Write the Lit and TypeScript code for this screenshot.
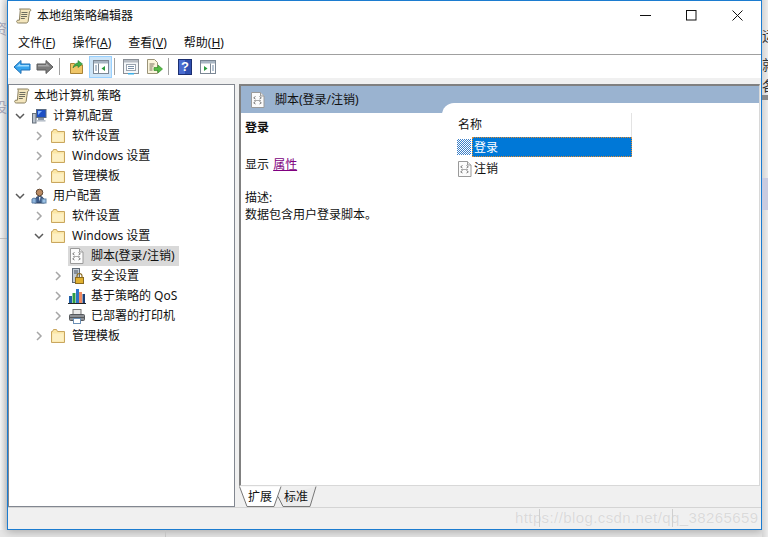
import { LitElement, html, css, svg } from "lit";
import { customElement } from "lit/decorators.js";

const scroll = svg`<svg class="ic" width="16" height="16" viewBox="0 0 16 16"><path d="M3.500 1h10c1 0 1.500 .8 1.300 1.600L13.500 3.500l-1.300 9.700c-.1 1-1 1.800-2 1.800H2.300c-1 0-1.800-.8-1.600-1.800.1-.6.500-1 1.200-1H3.400L4.200 3C4.300 2 4 1 3.500 1z" fill="#f4e6bd" stroke="#8a8060"/><path d="M5.500 4.500h6M5.300 6.500h6M5 8.500h6M4.800 10.500h4" stroke="#6e6e60" fill="none"/></svg>`;
const folder = svg`<svg class="ic" width="16" height="16" viewBox="0 0 16 16"><path d="M1.500 14.500V3.500h1l1-2h3l1 2h7v11z" fill="#fbe6a4" stroke="#c9a65e"/><path d="M2.500 13.500V5.500h11v8z" fill="#fdf0c4"/></svg>`;
const computer = svg`<svg class="ic" width="16" height="16" viewBox="0 0 16 16"><rect x="1.500" y="5.500" width="3.500" height="9.500" fill="#b9c2cc" stroke="#66707c"/><rect x="5.500" y="1.500" width="9.500" height="8" fill="#1d4fc4" stroke="#5b6b80"/><path d="M7 3h4l-4 4z" fill="#7fb4ff"/><rect x="7" y="10" width="6" height="2" fill="#8a96a6"/><rect x="5.500" y="12" width="9" height="1.600" fill="#b8c0ca"/></svg>`;
const user = svg`<svg class="ic" width="16" height="16" viewBox="0 0 16 16"><circle cx="8.500" cy="4.500" r="3.300" fill="#b98a62" stroke="#5e4632"/><path d="M3.500 15c0-5 2-6.500 5-6.500s5 1.500 5 6.500z" fill="#3d5c8a" stroke="#2f3f5a"/><path d="M1 15v-4l2-1 2 1v4z" fill="#8db4dc" stroke="#5c7fa6"/><path d="M8 9l.7 4.500L9.500 9z" fill="#fff"/><rect x="11" y="11" width="4" height="4" fill="#9cc2e6" stroke="#6285a8"/></svg>`;
const script = svg`<svg class="ic" width="16" height="16" viewBox="0 0 16 16"><path d="M1.500 .5h9l3.500 3.500v11.500H1.500z" fill="#fbfbfb" stroke="#9a9a9a"/><path d="M10.500 .5v3.500h3.500" fill="#e6e6e6" stroke="#9a9a9a"/><path d="M5.500 4.500L3.700 5.800l1.800 1.200M9.500 4.500l1.800 1.300L9.500 7M5.500 9.500L3.700 10.800l1.800 1.200M9.500 9.500l1.800 1.300L9.500 12" fill="none" stroke="#777"/><path d="M4 8.500h7" stroke="#aaa"/></svg>`;
const security = svg`<svg class="ic" width="16" height="16" viewBox="0 0 16 16"><rect x="3.500" y="0.500" width="7" height="14" fill="#c3ccd6" stroke="#5f6a76"/><path d="M5 3h4M5 5h4" stroke="#45505c"/><path d="M8 9.500V8a2.500 2.500 0 015 0v1.500" fill="none" stroke="#8a6a20" stroke-width="1.200"/><rect x="6.500" y="9.500" width="8" height="6" fill="#e0b030" stroke="#8a6a20"/></svg>`;
const chart = svg`<svg class="ic" width="18" height="16" viewBox="0 0 18 16"><rect x="1" y="8" width="3" height="7" fill="#1f5fa8"/><rect x="4.500" y="5" width="3" height="10" fill="#2f9e44"/><rect x="8" y="1" width="3" height="14" fill="#2f74c8"/><rect x="11" y="4" width="3" height="11" fill="#f08a60"/><rect x="14.500" y="6" width="2.500" height="9" fill="#1c3f78"/><path d="M0 15.500h18" stroke="#222"/></svg>`;
const printer = svg`<svg class="ic" width="18" height="16" viewBox="0 0 18 16"><rect x="5" y="1.500" width="8" height="5" fill="#e9e9e9" stroke="#777"/><rect x="1.500" y="6.500" width="15" height="6" rx="1" fill="#8c8f94" stroke="#55585c"/><path d="M2 9.500h14" stroke="#55585c"/><rect x="5.500" y="10.500" width="7" height="5" fill="#fff" stroke="#6b8fb5"/></svg>`;
const chevD = svg`<svg width="12" height="12" viewBox="0 0 12 12"><path d="M2 4l4 4 4-4" fill="none" stroke="#595959" stroke-width="1.500"/></svg>`;
const chevR = svg`<svg width="12" height="12" viewBox="0 0 12 12"><path d="M4 2l4 4-4 4" fill="none" stroke="#a6a6a6" stroke-width="1.500"/></svg>`;

const back = svg`<svg width="18" height="16" viewBox="0 0 18 16"><path d="M1 8l7-6.500V5h9v6H8v3.500z" fill="#36a4ee" stroke="#1f6fb5"/><path d="M3 8l4-3.500V6h9v1.500H4z" fill="#9fdcff"/></svg>`;
const fwd = svg`<svg width="18" height="16" viewBox="0 0 18 16"><path d="M17 8l-7-6.500V5H1v6h9v3.500z" fill="#7c7c7c" stroke="#5a5a5a"/><path d="M2 6h8V4l4 3.500H2z" fill="#a8a8a8"/></svg>`;
const up = svg`<svg width="16" height="16" viewBox="0 0 16 16"><path d="M1.500 14.500V4.500h4l1 1.500h7v8.500z" fill="#efc567" stroke="#a98335"/><path d="M4 9c.5-3 2.500-5 5-5V1.500L13.500 5 9 8.500V6.500c-2 0-4 1-5 2.500z" fill="#3fae4a" stroke="#2a7a32" stroke-width=".6"/></svg>`;
const paneHide = svg`<svg width="16" height="14" viewBox="0 0 16 14"><rect x=".5" y=".5" width="15" height="13" fill="#fff" stroke="#7b8794"/><rect x="1" y="1" width="14" height="2.500" fill="#a9b6c3"/><path d="M5.500 3.500v10" stroke="#7b8794"/><path d="M2 6h2M2 8h2M2 10h2" stroke="#6f8aa8"/><path d="M12 6v5L8.500 8.500z" fill="#2a9a3c"/></svg>`;
const props = svg`<svg width="16" height="16" viewBox="0 0 16 16"><rect x=".5" y=".5" width="15" height="14" fill="#f4f6f8" stroke="#8a8f96"/><rect x="1" y="1" width="14" height="2.500" fill="#b6bcc4"/><rect x="3.500" y="5.500" width="9" height="6" fill="#fff" stroke="#9aa4b0"/><path d="M5 7.500h6M5 9.500h6" stroke="#7a90a8"/><rect x="5" y="14" width="6" height="1.500" fill="#3db0e8"/></svg>`;
const exportIc = svg`<svg width="17" height="16" viewBox="0 0 17 16"><path d="M1.500 .5h7l3 3v11h-10z" fill="#fbf5dc" stroke="#9a9378"/><path d="M3.500 5h5M3.500 7h4M3.500 9h3M3.500 11h3" stroke="#77705a"/><path d="M8 8.500h4V6l4.500 4-4.500 4v-2.500H8z" fill="#55bb44" stroke="#3a8f2e" stroke-width=".7"/></svg>`;
const help = svg`<svg width="14" height="16" viewBox="0 0 14 16"><rect x=".5" y=".5" width="13" height="15" fill="#2f4fb0" stroke="#1b2e70"/><rect x="1" y="1" width="6" height="14" fill="#4a6cd0"/></svg>`;
const paneShow = svg`<svg width="16" height="14" viewBox="0 0 16 14"><rect x=".5" y=".5" width="15" height="13" fill="#fff" stroke="#7b8794"/><rect x="1" y="1" width="14" height="2.500" fill="#a9b6c3"/><path d="M10.500 3.500v10" stroke="#7b8794"/><path d="M12 6h2M12 8h2M12 10h2" stroke="#6f8aa8"/><path d="M4 6v5l3.500-2.500z" fill="#2a9a3c"/></svg>`;

type Row = { level: number; chev?: "d" | "r"; icon: unknown; text: string; sel?: boolean };
const rows: Row[] = [
  { level: 0, icon: scroll, text: "本地计算机 策略" },
  { level: 1, chev: "d", icon: computer, text: "计算机配置" },
  { level: 2, chev: "r", icon: folder, text: "软件设置" },
  { level: 2, chev: "r", icon: folder, text: "Windows 设置" },
  { level: 2, chev: "r", icon: folder, text: "管理模板" },
  { level: 1, chev: "d", icon: user, text: "用户配置" },
  { level: 2, chev: "r", icon: folder, text: "软件设置" },
  { level: 2, chev: "d", icon: folder, text: "Windows 设置" },
  { level: 3, icon: script, text: "脚本(登录/注销)", sel: true },
  { level: 3, chev: "r", icon: security, text: "安全设置" },
  { level: 3, chev: "r", icon: chart, text: "基于策略的 QoS" },
  { level: 3, chev: "r", icon: printer, text: "已部署的打印机" },
  { level: 2, chev: "r", icon: folder, text: "管理模板" },
];

@customElement("app-root")
export class AppRoot extends LitElement {
  static styles = css`
    :host {
      display: flex;
      height: 537px;
      width: 768px;
      overflow: hidden;
      position: relative;
      background: #e6e6e6;
      font: 12px/16px "Noto Sans", "Noto Sans CJK SC", sans-serif;
      color: #111;
    }
    .strip { overflow: hidden; display: flex; flex-direction: column; flex: none; }
    .strip.l { width: 7px; background: linear-gradient(90deg, #f6f6f6, #dcdcdc); align-items: flex-end; padding-top: 22px; box-sizing: border-box; color: #aab; font-size: 14px; height: 530px; }
    .strip.l span { white-space: nowrap; width: 7px; overflow: hidden; height: 14px; line-height: 14px; flex: none; display: flex; justify-content: flex-end; }
    .strip.l .g { height: 64px; flex: none; }
    .strip.l .ln { height: 1px; width: 7px; background: #c4c4c4; margin-top: 124px; flex: none; }
    .strip.r { width: 6px; background: linear-gradient(90deg, #d4d4d4, #ececec); color: #333; padding-top: 28px; box-sizing: border-box; font-size: 14px; }
    .strip.r span { white-space: nowrap; flex: none; line-height: 15px; }
    .strip.r .s1 { height: 29px; }
    .strip.r .s2 { height: 21px; }
    .strip.r .s3 { height: 17px; }
    .strip.r .b { height: 5px; background: #8a8a8a; flex: none; }
    .strip.r .p { height: 32px; background: #c9cbe0; margin-top: 78px; flex: none; }
    .win {
      width: 755px;
      height: 530px;
      box-sizing: border-box;
      border: 1px solid #1c7cd0;
      background: #f0f0f0;
      box-shadow: 0 2px 8px rgba(0,0,0,.25);
      display: flex;
      flex-direction: column;
      flex: none;
    }
    .title { height: 32px; background: #fff; display: flex; align-items: center; padding-left: 8px; gap: 5px; flex: none; }
    .title .ic { margin-top: -2px; }
    .title .t { flex: 1; margin-top: -2px; }
    .wc { display: flex; align-items: center; margin-top: -3px; padding-right: 1px; }
    .wc span { width: 46px; display: flex; justify-content: center; }
    .menu { height: 22px; padding-bottom: 2px; box-sizing: border-box; background: #fff; display: flex; gap: 17px; padding-left: 10px; align-items: center; border-bottom: 1px solid #a0a0a0; flex: none; }
    .menu u { text-underline-offset: 1px; }
    .tools { height: 23px; background: #fff; display: flex; align-items: center; padding-left: 5px; flex: none; }
    .tools .b { display: flex; align-items: center; justify-content: center; flex: none; }
    .tools .s { width: 1px; height: 17px; background: #a0a0a0; flex: none; }
    .tools .on { width: 21px; height: 20px; background: #cce4f7; border: 1px solid #99d1ff; }
    .tools .help { position: relative; }
    .tools .q { position: absolute; inset: 0; display: flex; align-items: center; justify-content: center; color: #fff; font: 700 13px/16px "Liberation Sans", sans-serif; }
    .band { height: 6px; flex: none; }
    .panes { display: flex; flex: 1; min-height: 0; }
    .left { width: 227px; box-sizing: border-box; background: #fff; border: 1px solid #828790; padding-top: 1px; flex: none; }
    .row { height: 20px; display: flex; align-items: center; white-space: nowrap; }
    .chev { width: 12px; height: 12px; flex: none; display: flex; margin-right: 5px; }
    .item { display: flex; align-items: center; height: 20px; gap: 6px; }
    .item .ic { flex: none; }
    .item .txt { padding-right: 4px; }
    .item.sel { background: #d9d9d9; margin-left: -1px; padding-left: 1px; }
    .icw { width: 16px; display: flex; justify-content: center; flex: none; }
    .l0 { padding-left: 5px; }
    .l0 .item { gap: 4px; }
    .l1 { padding-left: 5px; }
    .l2 { padding-left: 24px; }
    .l3 { padding-left: 43px; }
    .right { width: 521px; margin-left: 4px; display: flex; flex-direction: column; flex: none; }
    .rbox { flex: 1; min-height: 0; background: #fff; border: 1px solid #d8d8d8; border-left: 2px solid #808080; border-top: 2px solid #808080; box-sizing: border-box; display: flex; flex-direction: column; }
    .hdr { height: 27px; background: #9ab3d0; display: flex; align-items: center; padding-left: 9px; gap: 9px; flex: none; }
    .cols { display: flex; flex: 1; min-height: 0; }
    .desc { width: 201px; padding: 7px 0 0 4px; flex: none; box-sizing: border-box; }
    .desc b { display: block; font-weight: 700; }
    .desc .show { margin-top: 21px; }
    .desc a { color: #800080; text-decoration: underline; margin-left: 1px; }
    .desc .d { margin-top: 17px; }
    .desc .e { margin-top: 1px; }
    .list { flex: 1; margin-top: -10px; background: #fff; border-top-left-radius: 12px; padding-left: 16px; }
    .lh { height: 34px; padding-top: 10px; box-sizing: border-box; width: 174px; display: flex; align-items: center; position: relative; }
    .lh::after { content: ""; position: absolute; right: 0; top: 10px; bottom: 0; width: 1px; background: #e3e3e3; }
    .lr { display: flex; align-items: center; height: 20px; margin-left: -1px; }
    .lr .nm { width: 160px; height: 20px; box-sizing: border-box; display: flex; align-items: center; padding: 1px 0 0 2px; margin-left: -1px; }
    .lr.on .nm { background: #0078d7; color: #fff; outline: 1px dotted #e08a30; outline-offset: -1px; margin-left: 1px; }
    .lr + .lr { margin-top: 2px; }
    .lr + .lr .nm { padding-top: 0; }
    .dither { width: 14px; height: 16px; flex: none; background: repeating-conic-gradient(#3b7fc8 0 25%, #fff 0 50%) 0 0 / 2px 2px; }
    .tabs { height: 21px; display: flex; align-items: flex-start; padding-left: 9px; gap: 12px; flex: none; position: relative; }
    .tabs svg { position: absolute; left: 0; top: 0; }
    .tab { position: relative; width: 24px; height: 20px; line-height: 20px; margin-top: 1px; }
    .status { height: 22px; border-top: 1px solid #d4d4d4; box-sizing: border-box; flex: none; }
    .wm { position: absolute; left: 515px; top: 507px; font: 15px/22px "Liberation Sans", sans-serif; color: rgba(214,214,214,.9); white-space: nowrap; letter-spacing: .4px; text-shadow: 0 0 1px rgba(255,255,255,.8); }
    .mark { position: absolute; top: 509px; height: 18px; width: 1px; background: #cfcfcf; }
    .bline { position: absolute; left: 165px; top: 530px; width: 1px; height: 7px; background: #c4c4c4; }
  `;

  render() {
    return html`
      <div class="strip l">
        <span>资</span><div class="g"></div><span>设</span><div class="ln"></div>
      </div>
      <div class="win">
        <div class="title">
          ${scroll}<span class="t">本地组策略编辑器</span>
          <div class="wc">
            <span><svg width="11" height="11" viewBox="0 0 11 11"><path d="M0 5.500h11" stroke="#111"/></svg></span>
            <span><svg width="11" height="11" viewBox="0 0 11 11"><rect x=".5" y=".5" width="9.500" height="9.500" fill="none" stroke="#111"/></svg></span>
            <span><svg width="11" height="11" viewBox="0 0 11 11"><path d="M.5 .5l10 10M10.500 .5l-10 10" stroke="#111"/></svg></span>
          </div>
        </div>
        <div class="menu">
          <span>文件(<u>F</u>)</span><span>操作(<u>A</u>)</span><span>查看(<u>V</u>)</span><span>帮助(<u>H</u>)</span>
        </div>
        <div class="tools">
          <span class="b" style="width:18px">${back}</span>
          <span class="b" style="width:18px;margin-left:5px">${fwd}</span>
          <span class="s" style="margin-left:5px"></span>
          <span class="b" style="width:16px;margin-left:9px">${up}</span>
          <span class="b on" style="margin-left:4px">${paneHide}</span>
          <span class="s" style="margin-left:2px"></span>
          <span class="b" style="width:16px;margin-left:8px">${props}</span>
          <span class="b" style="width:17px;margin-left:7px">${exportIc}</span>
          <span class="s" style="margin-left:5px"></span>
          <span class="b help" style="width:14px;margin-left:9px">${help}<span class="q">?</span></span>
          <span class="b" style="width:16px;margin-left:8px">${paneShow}</span>
        </div>
        <div class="band"></div>
        <div class="panes">
          <div class="left">
            ${rows.map(
              (r) => html`<div class="row l${r.level}">
                ${r.chev ? html`<span class="chev">${r.chev === "d" ? chevD : chevR}</span>` : ""}
                ${r.level > 0 && !r.chev ? html`<span class="chev"></span>` : ""}
                <span class="item ${r.sel ? "sel" : ""}"><span class="icw">${r.icon}</span><span class="txt">${r.text}</span></span>
              </div>`
            )}
          </div>
          <div class="right">
            <div class="rbox">
              <div class="hdr">${script}<span>脚本(登录/注销)</span></div>
              <div class="cols">
                <div class="desc">
                  <b>登录</b>
                  <div class="show">显示 <a>属性</a></div>
                  <div class="d">描述:</div>
                  <div class="e">数据包含用户登录脚本。</div>
                </div>
                <div class="list">
                  <div class="lh">名称</div>
                  <div class="lr on"><span class="dither"></span><span class="nm">登录</span></div>
                  <div class="lr">${script}<span class="nm">注销</span></div>
                </div>
              </div>
            </div>
            <div class="tabs">
              <svg width="90" height="21" viewBox="0 0 90 21">
                <path d="M39 10.500L44 20.500H71L77 .5" fill="#ececec" stroke="#777"/>
                <path d="M.5 .5L8 20.500H35L42 .5" fill="#fff" stroke="#777"/>
              </svg>
              <span class="tab">扩展</span><span class="tab">标准</span>
            </div>
          </div>
        </div>
        <div class="status"></div>
      </div>
      <div class="strip r">
        <span class="s1">运</span><span class="s2">就</span><span class="s3">各</span><div class="b"></div><div class="p"></div>
      </div>
      <div class="wm">https://blog.csdn.net/qq_38265659</div>
      <div class="mark" style="left:539px"></div>
      <div class="mark" style="left:672px"></div>
      <div class="bline"></div>
    `;
  }
}
